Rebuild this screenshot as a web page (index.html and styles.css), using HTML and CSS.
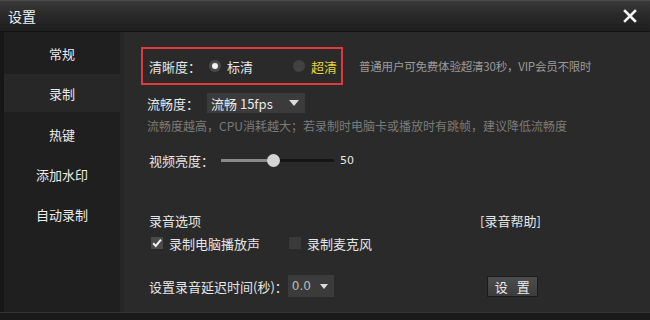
FILE: index.html
```html
<!DOCTYPE html>
<html lang="zh-CN">
<head>
    <meta charset="UTF-8">
    <title>设置</title>
    <link rel="stylesheet" href="styles.css">
</head>
<body>
    <div class="window">
        <div class="titlebar">
            <span class="title">设置</span>
            <svg class="close" width="14" height="14" viewBox="0 0 14 14">
                <path d="M2 2 L12 12 M12 2 L2 12" stroke="#f2f2f2" stroke-width="2.6" stroke-linecap="square"/>
            </svg>
        </div>
        <div class="body">
            <ul class="sidebar">
                <li>常规</li>
                <li class="active">录制</li>
                <li>热键</li>
                <li>添加水印</li>
                <li>自动录制</li>
            </ul>
            <div class="main">
                <div class="row quality-row">
                    <div class="quality-box">
                        <span class="label">清晰度：</span>
                        <span class="radio checked"></span>
                        <span class="opt">标清</span>
                        <span class="radio"></span>
                        <span class="opt vip">超清</span>
                    </div>
                    <span class="note">普通用户可免费体验超清30秒，VIP会员不限时</span>
                </div>
                <div class="row fluency-row">
                    <span class="label">流畅度：</span>
                    <div class="select fluency-select">
                        <span>流畅 15fps</span>
                        <span class="arrow"></span>
                    </div>
                </div>
                <div class="hint">流畅度越高，CPU消耗越大；若录制时电脑卡或播放时有跳帧，建议降低流畅度</div>
                <div class="row bright-row">
                    <span class="label">视频亮度：</span>
                    <div class="slider">
                        <div class="fill" style="width: 53px;"></div>
                        <div class="knob" style="left: 46px;"></div>
                    </div>
                    <span class="value">50</span>
                </div>
                <div class="row audio-head">
                    <span class="label">录音选项</span>
                    <span class="help">[录音帮助]</span>
                </div>
                <div class="row check-row">
                    <span class="check checked">
                        <svg width="12" height="12" viewBox="0 0 12 12">
                            <path d="M2.2 6.2 L4.8 9 L10 2.6" stroke="#f0f0f0" stroke-width="2" fill="none"/>
                        </svg>
                    </span>
                    <span class="opt">录制电脑播放声</span>
                    <span class="check mic"></span>
                    <span class="opt">录制麦克风</span>
                </div>
                <div class="row delay-row">
                    <span class="label">设置录音延迟时间(秒)：</span>
                    <div class="select delay-select">
                        <span>0.0</span>
                        <span class="arrow"></span>
                    </div>
                    <button class="btn">设 置</button>
                </div>
            </div>
        </div>
        <div class="bottom"></div>
    </div>
</body>
</html>
```

FILE: styles.css
```css
html, body {
    margin: 0;
    padding: 0;
    background: #141414;
}
.window {
    width: 650px;
    height: 320px;
    display: flex;
    flex-direction: column;
    font-family: "Noto Sans CJK SC", "DejaVu Sans", sans-serif;
    font-size: 13px;
    color: #e6e6e6;
    overflow: hidden;
}
.titlebar {
    height: 32px;
    display: flex;
    align-items: center;
    justify-content: space-between;
    padding: 0 13px 0 8px;
    background: linear-gradient(#3a3a3a, #2a2a2a 45%, #1f1f1f);
    border-top: 1px solid #4a4a4a;
    box-sizing: border-box;
    border-bottom: 1px solid #141414;
}
.title {
    font-size: 14px;
    color: #f0f0f0;
}
.body {
    flex: 1;
    display: flex;
    border-left: 4px solid #161616;
}
.sidebar {
    list-style: none;
    margin: 0;
    padding: 0;
    width: 116px;
    background: #1f1f1f;
    border-right: 4px solid #262626;
}
.sidebar li {
    height: 40px;
    line-height: 46px;
    text-align: center;
    color: #ececec;
}
.sidebar li:first-child {
    height: 42px;
    line-height: 44px;
}
.sidebar li.active {
    background: #272727;
    height: 38px;
    line-height: 40px;
}
.main {
    flex: 1;
    background: #2a2a2a;
    padding: 15px 0 0 17px;
    display: flex;
    flex-direction: column;
}
.row {
    display: flex;
    align-items: center;
}
.quality-box {
    border: 2px solid #e2383c;
    display: flex;
    align-items: center;
    padding-left: 6px;
    box-sizing: border-box;
    width: 202px;
    height: 38px;
}
.quality-box .label {
    margin-right: 8px;
}
.radio {
    width: 12px;
    height: 12px;
    border-radius: 50%;
    background: #424242;
    margin-right: 6px;
    position: relative;
}
.radio.checked {
    background: #4a4a4a;
}
.radio.checked::after {
    content: "";
    position: absolute;
    left: 3px;
    top: 3px;
    width: 6px;
    height: 6px;
    border-radius: 50%;
    background: #f4f4f4;
}
.quality-box .opt {
    margin-right: 40px;
}
.quality-box .vip {
    color: #e8d53c;
    margin-right: 0;
}
.note {
    margin-left: 16px;
    font-size: 11.5px;
    letter-spacing: -0.2px;
    color: #9a9a9a;
}
.fluency-row {
    margin-top: 8px;
    height: 20px;
    padding-left: 6px;
}
.select {
    display: flex;
    align-items: center;
    justify-content: space-between;
    background: #3b3b3b;
    color: #e8e8e8;
    height: 20px;
    box-sizing: border-box;
    padding: 0 6px 0 4px;
    font-family: "Noto Sans CJK SC", "Liberation Serif", serif;
}
.fluency-select {
    width: 98px;
    margin-left: 8px;
}
.delay-select {
    width: 46px;
    height: 22px;
    margin-left: 0;
    color: #bbb;
    font-family: "DejaVu Sans", sans-serif;
    font-size: 12px;
}
.arrow {
    width: 0;
    height: 0;
    border-left: 5px solid transparent;
    border-right: 5px solid transparent;
    border-top: 6px solid #dcdcdc;
}
.delay-select .arrow {
    border-left-width: 4px;
    border-right-width: 4px;
    border-top-width: 5px;
}
.hint {
    margin-top: 5px;
    padding-left: 6px;
    height: 16px;
    line-height: 16px;
    font-size: 12px;
    color: #7a7a7a;
}
.bright-row {
    margin-top: 18px;
    height: 16px;
    padding-left: 8px;
}
.slider {
    position: relative;
    width: 113px;
    height: 3px;
    background: #161616;
    margin-left: 7px;
}
.slider .fill {
    height: 3px;
    background: #8a8a8a;
}
.slider .knob {
    position: absolute;
    top: -5px;
    width: 13px;
    height: 13px;
    border-radius: 50%;
    background: #d4d4d4;
}
.value {
    margin-left: 6px;
    font-family: "DejaVu Sans", sans-serif;
    font-size: 11px;
}
.audio-head {
    margin-top: 44px;
    height: 16px;
    padding-left: 8px;
}
.help {
    margin-left: 279px;
}
.check-row {
    margin-top: 7px;
    height: 16px;
    padding-left: 10px;
}
.check {
    width: 12px;
    height: 12px;
    background: #4a4a4a;
    margin-right: 6px;
    display: flex;
}
.check.mic {
    background: #3a3a3a;
    margin-left: 29px;
}
.delay-row {
    margin-top: 24px;
    height: 22px;
    padding-left: 8px;
}
.btn {
    margin-left: 153px;
    width: 51px;
    height: 21px;
    padding: 0;
    border: 1px solid #1c1c1c;
    background: linear-gradient(#4d4d4d, #3c3c3c);
    color: #ededed;
    font-family: "Noto Sans CJK SC", sans-serif;
    font-size: 13px;
    letter-spacing: 3px;
    text-indent: 3px;
    cursor: pointer;
}
.bottom {
    height: 7px;
    background: #1a1a1a;
    border-top: 1px solid #333;
}
```
